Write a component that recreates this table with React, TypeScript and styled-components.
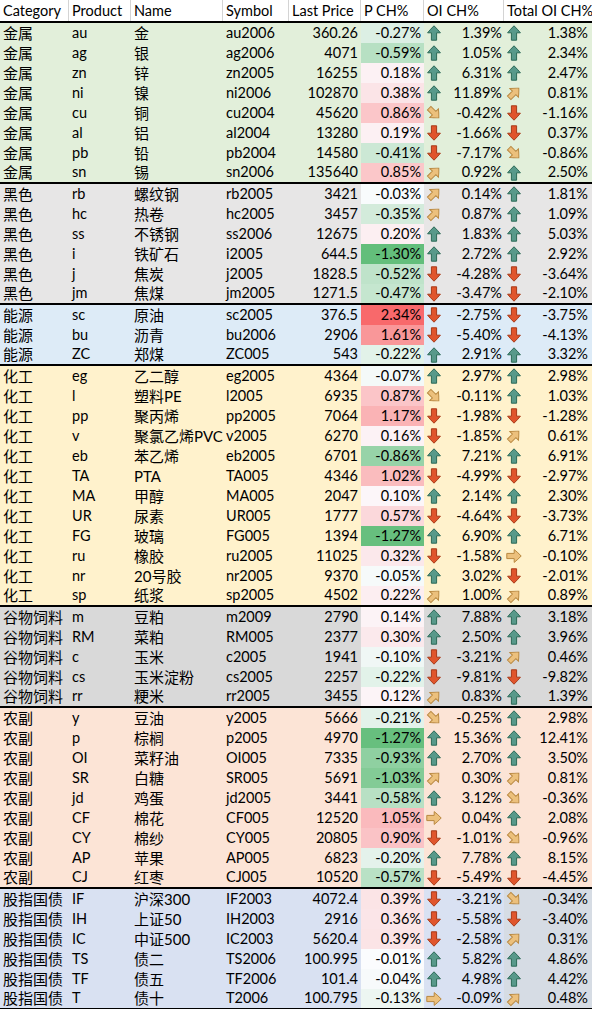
import React from "react";
import styled, { createGlobalStyle } from "styled-components";

const GlobalStyle = createGlobalStyle`
  html, body { margin: 0; padding: 0; overflow: hidden; background: #fff; }
  body { font-family: Lato, "Noto Sans CJK SC", sans-serif; color: #000; }
`;

const COLS = "69px 62px 92px 66px 72px 63px 80px 88px";

type Dir = "up" | "ur" | "r" | "dr" | "dn";

type Row = [string, string, string, string, number, Dir, string, Dir, string];

interface Group {
  cat: string;
  bg: string;
  totalBg?: string;
  rows: Row[];
}

const groups: Group[] = [
  {
    cat: "金属",
    bg: "#E2EFDA",
    rows: [
      ["au", "金", "au2006", "360.26", -0.27, "up", "1.39%", "up", "1.38%"],
      ["ag", "银", "ag2006", "4071", -0.59, "up", "1.05%", "up", "2.34%"],
      ["zn", "锌", "zn2005", "16255", 0.18, "up", "6.31%", "up", "2.47%"],
      ["ni", "镍", "ni2006", "102870", 0.38, "up", "11.89%", "ur", "0.81%"],
      ["cu", "铜", "cu2004", "45620", 0.86, "dr", "-0.42%", "dn", "-1.16%"],
      ["al", "铝", "al2004", "13280", 0.19, "dn", "-1.66%", "dn", "0.37%"],
      ["pb", "铅", "pb2004", "14580", -0.41, "dn", "-7.17%", "dr", "-0.86%"],
      ["sn", "锡", "sn2006", "135640", 0.85, "ur", "0.92%", "up", "2.50%"],
    ],
  },
  {
    cat: "黑色",
    bg: "#E7E6E6",
    rows: [
      ["rb", "螺纹钢", "rb2005", "3421", -0.03, "ur", "0.14%", "up", "1.81%"],
      ["hc", "热卷", "hc2005", "3457", -0.35, "ur", "0.87%", "up", "1.09%"],
      ["ss", "不锈钢", "ss2006", "12675", 0.2, "up", "1.83%", "up", "5.03%"],
      ["i", "铁矿石", "i2005", "644.5", -1.3, "up", "2.72%", "up", "2.92%"],
      ["j", "焦炭", "j2005", "1828.5", -0.52, "dn", "-4.28%", "dn", "-3.64%"],
      ["jm", "焦煤", "jm2005", "1271.5", -0.47, "dn", "-3.47%", "dn", "-2.10%"],
    ],
  },
  {
    cat: "能源",
    bg: "#DDEBF7",
    rows: [
      ["sc", "原油", "sc2005", "376.5", 2.34, "dn", "-2.75%", "dn", "-3.75%"],
      ["bu", "沥青", "bu2006", "2906", 1.61, "dn", "-5.40%", "dn", "-4.13%"],
      ["ZC", "郑煤", "ZC005", "543", -0.22, "up", "2.91%", "up", "3.32%"],
    ],
  },
  {
    cat: "化工",
    bg: "#FFF2CC",
    rows: [
      ["eg", "乙二醇", "eg2005", "4364", -0.07, "up", "2.97%", "up", "2.98%"],
      ["l", "塑料PE", "l2005", "6935", 0.87, "dr", "-0.11%", "up", "1.03%"],
      ["pp", "聚丙烯", "pp2005", "7064", 1.17, "dn", "-1.98%", "dn", "-1.28%"],
      ["v", "聚氯乙烯PVC", "v2005", "6270", 0.16, "dn", "-1.85%", "ur", "0.61%"],
      ["eb", "苯乙烯", "eb2005", "6701", -0.86, "up", "7.21%", "up", "6.91%"],
      ["TA", "PTA", "TA005", "4346", 1.02, "dn", "-4.99%", "dn", "-2.97%"],
      ["MA", "甲醇", "MA005", "2047", 0.1, "up", "2.14%", "up", "2.30%"],
      ["UR", "尿素", "UR005", "1777", 0.57, "dn", "-4.64%", "dn", "-3.73%"],
      ["FG", "玻璃", "FG005", "1394", -1.27, "up", "6.90%", "up", "6.71%"],
      ["ru", "橡胶", "ru2005", "11025", 0.32, "dn", "-1.58%", "r", "-0.10%"],
      ["nr", "20号胶", "nr2005", "9370", -0.05, "up", "3.02%", "dn", "-2.01%"],
      ["sp", "纸浆", "sp2005", "4502", 0.22, "ur", "1.00%", "ur", "0.89%"],
    ],
  },
  {
    cat: "谷物饲料",
    bg: "#D9D9D9",
    rows: [
      ["m", "豆粕", "m2009", "2790", 0.14, "up", "7.88%", "up", "3.18%"],
      ["RM", "菜粕", "RM005", "2377", 0.3, "up", "2.50%", "up", "3.96%"],
      ["c", "玉米", "c2005", "1941", -0.1, "dn", "-3.21%", "ur", "0.46%"],
      ["cs", "玉米淀粉", "cs2005", "2257", -0.22, "dn", "-9.81%", "dn", "-9.82%"],
      ["rr", "粳米", "rr2005", "3455", 0.12, "ur", "0.83%", "up", "1.39%"],
    ],
  },
  {
    cat: "农副",
    bg: "#FCE4D6",
    rows: [
      ["y", "豆油", "y2005", "5666", -0.21, "dr", "-0.25%", "up", "2.98%"],
      ["p", "棕榈", "p2005", "4970", -1.27, "up", "15.36%", "up", "12.41%"],
      ["OI", "菜籽油", "OI005", "7335", -0.93, "up", "2.70%", "up", "3.50%"],
      ["SR", "白糖", "SR005", "5691", -1.03, "ur", "0.30%", "ur", "0.81%"],
      ["jd", "鸡蛋", "jd2005", "3441", -0.58, "up", "3.12%", "dr", "-0.36%"],
      ["CF", "棉花", "CF005", "12520", 1.05, "r", "0.04%", "up", "2.08%"],
      ["CY", "棉纱", "CY005", "20805", 0.9, "dn", "-1.01%", "dr", "-0.96%"],
      ["AP", "苹果", "AP005", "6823", -0.2, "up", "7.78%", "up", "8.15%"],
      ["CJ", "红枣", "CJ005", "10520", -0.57, "dn", "-5.49%", "dn", "-4.45%"],
    ],
  },
  {
    cat: "股指国债",
    bg: "#D9E1F2",
    totalBg: "#D6DCE4",
    rows: [
      ["IF", "沪深300", "IF2003", "4072.4", 0.39, "dn", "-3.21%", "dr", "-0.34%"],
      ["IH", "上证50", "IH2003", "2916", 0.36, "dn", "-5.58%", "dn", "-3.40%"],
      ["IC", "中证500", "IC2003", "5620.4", 0.39, "dn", "-2.58%", "ur", "0.31%"],
      ["TS", "债二", "TS2006", "100.995", -0.01, "up", "5.82%", "up", "4.86%"],
      ["TF", "债五", "TF2006", "101.4", -0.04, "up", "4.98%", "up", "4.42%"],
      ["T", "债十", "T2006", "100.795", -0.13, "r", "-0.09%", "ur", "0.48%"],
    ],
  },
];

const MIN = -1.3;
const MAX = 2.34;
const lerp = (a: number[], b: number[], t: number) =>
  a.map((v, i) => Math.round(v + (b[i] - v) * t));
const scaleColor = (v: number) => {
  const white = [252, 252, 255];
  const green = [99, 190, 123];
  const red = [248, 105, 107];
  const c = v >= 0 ? lerp(white, red, Math.min(v / MAX, 1)) : lerp(white, green, Math.min(v / MIN, 1));
  return `rgb(${c[0]},${c[1]},${c[2]})`;
};

const Sheet = styled.div`
  width: 592px;
  display: flex;
  flex-direction: column;
  font-family: Lato, "Noto Sans CJK SC", sans-serif;
  font-size: 14px;
  line-height: 1;
  color: #000;
`;

const HeaderRow = styled.div`
  display: grid;
  grid-template-columns: ${COLS};
  height: 21px;
  border-bottom: 2px solid #000;
  background: #fff;
`;

const HeaderCell = styled.div<{ $last?: boolean }>`
  display: flex;
  align-items: center;
  padding: 1px 0 0 3px;
  border-right: ${(p) => (p.$last ? "none" : "1px solid #d4d4d4")};
  white-space: nowrap;
  overflow: hidden;
  font-size: 14.5px;
`;

const GroupBox = styled.div<{ $bg: string }>`
  display: flex;
  flex-direction: column;
  background: ${(p) => p.$bg};
  border-bottom: 2px solid #000;
`;

const RowLine = styled.div<{ $last: boolean }>`
  display: grid;
  grid-template-columns: ${COLS};
  height: ${(p) => (p.$last ? 19 : 20)}px;
  font-size: 14.5px;
`;

const TextCell = styled.div<{ $cjk?: boolean }>`
  display: flex;
  align-items: center;
  padding-left: 3px;
  white-space: nowrap;
  overflow: visible;
  font-size: ${(p) => (p.$cjk ? "15px" : "14.5px")};
`;

const NumCell = styled.div<{ $bg?: string }>`
  display: flex;
  align-items: center;
  justify-content: flex-end;
  padding-right: 3px;
  white-space: nowrap;
  background: ${(p) => p.$bg || "transparent"};
`;

const IconCell = styled.div<{ $bg?: string; $pr: number }>`
  display: flex;
  align-items: center;
  justify-content: space-between;
  padding: 0 ${(p) => p.$pr}px 0 3px;
  white-space: nowrap;
  background: ${(p) => p.$bg || "transparent"};
`;

const ArrowSvg = styled.svg`
  width: 14px;
  height: 16px;
  flex: none;
  display: block;
  overflow: visible;
`;

const arrowColors: Record<Dir, [string, string]> = {
  up: ["#58998a", "#2c6a57"],
  ur: ["#ecc07c", "#b8873f"],
  r: ["#ecc07c", "#b8873f"],
  dr: ["#ecc07c", "#b8873f"],
  dn: ["#e0552c", "#a83a18"],
};

const rotation: Record<Dir, number> = { up: 0, ur: 45, r: 90, dr: 135, dn: 180 };

const Arrow: React.FC<{ dir: Dir }> = ({ dir }) => {
  const [fill, stroke] = arrowColors[dir];
  const diag = dir === "ur" || dir === "dr";
  const s = diag ? 0.95 : 1;
  return (
    <ArrowSvg viewBox="0 0 14 16">
      <g transform={`rotate(${rotation[dir]} 7 8) translate(7 8) scale(${s}) translate(-7 -8)`}>
        <path
          d="M7 0.8 C9.2 2.9 11.5 5.4 13.4 7.8 L9.6 7.8 L9.6 15.2 L4.4 15.2 L4.4 7.8 L0.6 7.8 C2.5 5.4 4.8 2.9 7 0.8 Z"
          fill={fill}
          stroke={stroke}
          strokeWidth={1}
          strokeLinejoin="miter"
        />
      </g>
    </ArrowSvg>
  );
};

const headers = ["Category", "Product", "Name", "Symbol", "Last Price", "P CH%", "OI CH%", "Total OI CH%"];

export default function App() {
  return (
    <>
      <GlobalStyle />
      <Sheet>
        <HeaderRow>
          {headers.map((h, i) => (
            <HeaderCell key={h} $last={i === headers.length - 1}>
              {h}
            </HeaderCell>
          ))}
        </HeaderRow>
        {groups.map((g) => (
          <GroupBox key={g.cat} $bg={g.bg}>
            {g.rows.map((r, i) => (
              <RowLine key={r[0]} $last={i === g.rows.length - 1}>
                <TextCell $cjk>{g.cat}</TextCell>
                <TextCell>{r[0]}</TextCell>
                <TextCell $cjk>{r[1]}</TextCell>
                <TextCell>{r[2]}</TextCell>
                <NumCell>{r[3]}</NumCell>
                <NumCell style={{ background: scaleColor(r[4]) }}>{r[4].toFixed(2)}%</NumCell>
                <IconCell $pr={2}>
                  <Arrow dir={r[5]} />
                  <span>{r[6]}</span>
                </IconCell>
                <IconCell $pr={4} $bg={g.totalBg}>
                  <Arrow dir={r[7]} />
                  <span>{r[8]}</span>
                </IconCell>
              </RowLine>
            ))}
          </GroupBox>
        ))}
      </Sheet>
    </>
  );
}
